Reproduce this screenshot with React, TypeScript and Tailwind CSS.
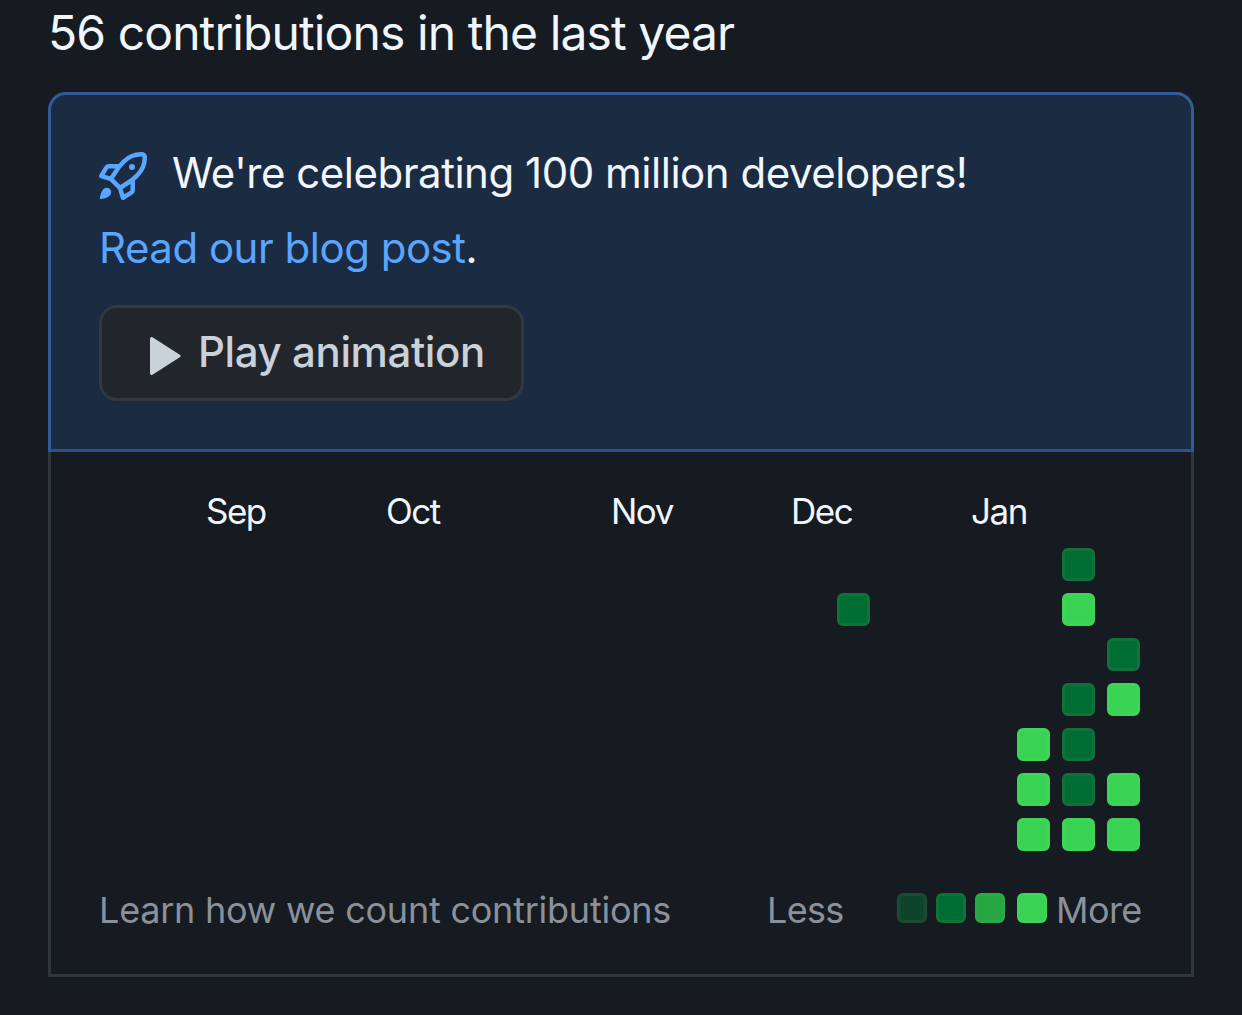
const months = [
  { name: 'Sep', at: 'col-start-3' },
  { name: 'Oct', at: 'col-start-7' },
  { name: 'Nov', at: 'col-start-12' },
  { name: 'Dec', at: 'col-start-16' },
  { name: 'Jan', at: 'col-start-20' },
];

const levels = [
  '',
  'border-3 bg-[#0e4429] border-[#1a4a31]',
  'border-3 bg-[#006d32] border-[#10713b]',
  'border-3 bg-[#26a641] border-[#2da848]',
  'border-3 bg-[#39d353] border-[#3fd458]',
];

// One string per weekday, one digit per week.
const days = [
  '00000000000000000000020',
  '00000000000000002000040',
  '00000000000000000000002',
  '00000000000000000000024',
  '00000000000000000000420',
  '00000000000000000000424',
  '00000000000000000000444',
].map((row) => row.split('').map(Number));

function RocketIcon() {
  return (
    <svg viewBox="0 0 16 16" className="size-12 shrink-0 fill-[#58a6ff]">
      <path d="M14.064 0h.186C15.216 0 16 .784 16 1.75v.186a8.752 8.752 0 0 1-2.564 6.186l-.458.459c-.314.314-.641.616-.979.904v3.207c0 .608-.315 1.172-.833 1.49l-2.774 1.707a.749.749 0 0 1-1.11-.418l-.954-3.102a1.214 1.214 0 0 1-.145-.125L3.754 9.816a1.218 1.218 0 0 1-.124-.145L.528 8.717a.749.749 0 0 1-.418-1.11l1.71-2.774A1.748 1.748 0 0 1 3.31 4h3.204c.288-.338.59-.665.904-.979l.459-.458A8.749 8.749 0 0 1 14.064 0ZM8.938 3.623h-.002l-.458.458c-.76.76-1.437 1.598-2.02 2.5l-1.5 2.317 2.143 2.143 2.317-1.5c.902-.583 1.74-1.26 2.499-2.02l.459-.458a7.25 7.25 0 0 0 2.123-5.127V1.75a.25.25 0 0 0-.25-.25h-.186a7.249 7.249 0 0 0-5.125 2.123ZM3.56 14.56c-.732.732-2.334 1.045-3.005 1.148a.234.234 0 0 1-.201-.064.234.234 0 0 1-.064-.201c.103-.671.416-2.273 1.15-3.003a1.502 1.502 0 1 1 2.12 2.12Zm6.94-3.935c-.088.06-.177.118-.266.175l-2.35 1.521.548 1.783 1.949-1.2a.25.25 0 0 0 .119-.213ZM3.678 8.116 5.2 5.766c.058-.09.117-.178.176-.266H3.309a.25.25 0 0 0-.213.119l-1.2 1.95ZM12 5a1 1 0 1 1-2 0 1 1 0 0 1 2 0Z" />
    </svg>
  );
}

export default function App() {
  return (
    <main className="h-[1015px] w-[1242px] overflow-hidden bg-[#161b22] px-12 font-['Inter',sans-serif] text-[#f0f6fc]">
      <h2 className="flex h-[92px] items-start pt-[3px] text-[48px] leading-[60px] font-normal tracking-[-0.9px] whitespace-nowrap">
        56 contributions in the last year
      </h2>

      <section className="h-[360px] rounded-t-[18px] border-[3px] border-[#315c99] border-b-[#2c5190] bg-[#1b2b41] pt-[45px] pl-[48px]">
        <div className="flex h-[75px] items-start text-[42px] leading-[66px] tracking-[-0.48px] whitespace-nowrap">
          <div className="pt-3">
            <RocketIcon />
          </div>
          <span className="pl-[25px]">We're celebrating 100 million developers!</span>
        </div>
        <p className="h-[90px] text-[42px] leading-[66px] tracking-[-0.5px] whitespace-nowrap">
          <a className="text-[#58a6ff]">Read our blog post</a>.
        </p>
        <button className="flex h-24 w-[425px] items-center rounded-[18px] border-[3px] border-[#33383e] bg-[#21262d] pl-[47px] text-[42px] font-medium tracking-[-0.4px] whitespace-nowrap text-[#c9d1d9]">
          <svg viewBox="0 0 32 40" className="mt-1.5 h-10 w-8 shrink-0 fill-[#c9d1d9]">
            <path d="M1 2.8v34.4c0 1.5 1.2 2.3 2.5 1.5L30.8 21.2c1.2-.8 1.2-1.8 0-2.5L3.5 1.2C2.2.4 1 1.3 1 2.8Z" />
          </svg>
          <span className="pb-[3px] pl-[17px]">Play animation</span>
        </button>
      </section>

      <section className="h-[525px] border-x-[3px] border-b-[3px] border-[#30363d] pt-[36px] pl-[66px]">
        <div className="grid h-[60px] grid-cols-[repeat(23,33px)] gap-x-3 text-[35px] leading-[46px] tracking-[-1.5px]">
          {months.map((m) => (
            <span key={m.name} className={`${m.at} row-start-1 -ml-px w-0 whitespace-nowrap`}>
              {m.name}
            </span>
          ))}
        </div>
        <div className="grid grid-cols-[repeat(23,33px)] gap-3">
          {days.flatMap((row, r) =>
            row.map((level, c) => (
              <i key={`${r}-${c}`} className={`size-[33px] rounded-[6px] ${levels[level]}`} />
            )),
          )}
        </div>
        <div className="-ml-[18px] flex pt-[36px] text-[36px] leading-[46px] tracking-[-0.23px] whitespace-nowrap text-[#8b919b]">
          <span className="w-[668px] shrink-0">Learn how we count contributions</span>
          <span className="w-[130px] shrink-0 tracking-[-0.7px]">Less</span>
          <div className="flex shrink-0 gap-[9px] pt-[6px]">
            {levels.slice(1).map((level, n) => (
              <i key={level} className={`size-[30px] rounded-[6px] ${level} ${n === 3 ? 'ml-[3px]' : ''}`} />
            ))}
          </div>
          <span className="pl-[9px] tracking-[-0.6px]">More</span>
        </div>
      </section>
    </main>
  );
}
